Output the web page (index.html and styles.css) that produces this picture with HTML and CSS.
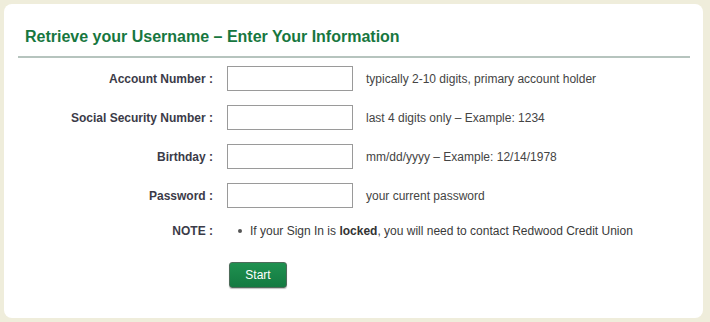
FILE: index.html
```html
<!DOCTYPE html>
<html lang="en">
<head>
<meta charset="utf-8">
<title>Retrieve your Username</title>
<link rel="stylesheet" href="styles.css">
</head>
<body>
<div class="card">
  <h1 class="title">Retrieve your Username – Enter Your Information</h1>
  <div class="rule"></div>
  <form class="form">
    <label class="lbl" for="acct">Account Number :</label>
    <input class="field" id="acct" type="text">
    <span class="hint">typically 2-10 digits, primary account holder</span>

    <label class="lbl" for="ssn">Social Security Number :</label>
    <input class="field" id="ssn" type="text">
    <span class="hint">last 4 digits only – Example: 1234</span>

    <label class="lbl" for="bday">Birthday :</label>
    <input class="field" id="bday" type="text">
    <span class="hint">mm/dd/yyyy – Example: 12/14/1978</span>

    <label class="lbl" for="pw">Password :</label>
    <input class="field" id="pw" type="password">
    <span class="hint">your current password</span>

    <span class="lbl note-lbl">NOTE :</span>
    <div class="note"><span class="dot"></span><span class="note-text">If your Sign In is <b>locked</b>, you will need to contact Redwood Credit Union</span></div>

    <span class="spacer"></span>
    <div class="actions"><button class="btn" type="button">Start</button></div>
  </form>
</div>
</body>
</html>
```
FILE: styles.css
```css
html, body {
  margin: 0;
  padding: 0;
}
body {
  background: #efeddb;
  padding: 4px;
  font-family: "Liberation Sans", Arial, sans-serif;
  font-size: 12px;
  color: #3a3a3a;
}
.card {
  box-sizing: border-box;
  width: 699px;
  height: 314px;
  background: #ffffff;
  border-radius: 8px;
  padding: 23px 13px 0 14px;
}
.title {
  margin: 0 0 0 7px;
  font-size: 16px;
  line-height: 20px;
  font-weight: bold;
  color: #17773f;
}
.rule {
  height: 2px;
  background: #b6c4be;
  margin-top: 9px;
}
.form {
  display: grid;
  grid-template-columns: 195px 126px 1fr;
  column-gap: 14px;
  row-gap: 14px;
  margin-top: 8px;
  align-items: center;
}
.lbl {
  text-align: right;
  font-weight: bold;
  color: #3b3b48;
}
.field {
  box-sizing: border-box;
  width: 126px;
  height: 25px;
  margin: 0;
  border: 1px solid #9a9a9a;
  background: #fff;
  padding: 2px 4px;
  font: inherit;
}
.hint {
  margin-left: -1px;
  color: #444;
}
.note-lbl {
  line-height: 18px;
}
.note {
  grid-column: 2 / 4;
  display: flex;
  align-items: center;
  line-height: 18px;
  color: #3a3a3a;
  white-space: nowrap;
}
.note b {
  color: #333;
}
.dot {
  width: 4px;
  height: 4px;
  border-radius: 50%;
  background: #555;
  margin: 0 8px 0 11px;
}
.actions {
  grid-column: 2 / 4;
  padding-top: 8px;
  padding-left: 2px;
}
.btn {
  width: 58px;
  height: 26px;
  border: 1px solid #4e6b5a;
  border-radius: 3px;
  background: linear-gradient(#1f9150, #137a41);
  color: #fff;
  font: 12px "Liberation Sans", Arial, sans-serif;
  padding: 0;
  box-shadow: 0 1px 1px rgba(0,0,0,0.25);
}
```
